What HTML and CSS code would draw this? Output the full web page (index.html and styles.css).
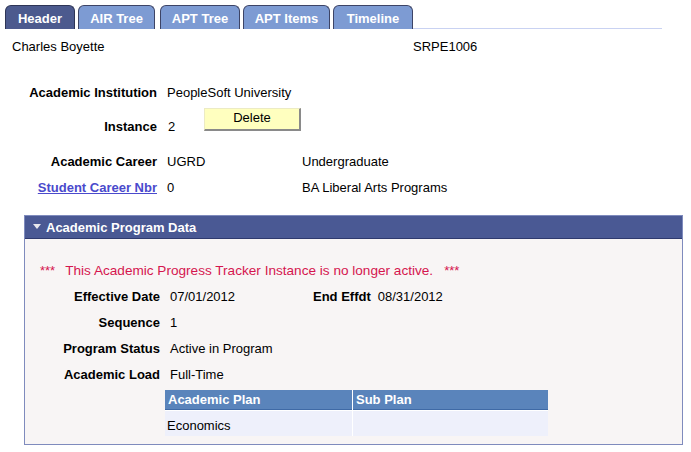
FILE: index.html
```html
<!DOCTYPE html>
<html>
<head>
<meta charset="utf-8">
<link rel="stylesheet" href="styles.css">
</head>
<body>
<div class="page">
  <nav class="tabs">
    <div class="tab tab-active tab-w1">Header</div>
    <div class="tab tab-w2">AIR Tree</div>
    <div class="tab tab-w3">APT Tree</div>
    <div class="tab tab-w4">APT Items</div>
    <div class="tab tab-w5">Timeline</div>
    <div class="tab-fill"></div>
  </nav>

  <div class="ident">
    <span>Charles Boyette</span>
    <span>SRPE1006</span>
  </div>

  <div class="fields">
    <div class="frow r1">
      <span class="lbl">Academic Institution</span>
      <span class="val">PeopleSoft University</span>
      <span class="desc"></span>
    </div>
    <div class="frow r2">
      <span class="lbl">Instance</span>
      <span class="val inst"><span class="num">2</span><button class="btn">Delete</button></span>
      <span class="desc"></span>
    </div>
    <div class="frow r3">
      <span class="lbl">Academic Career</span>
      <span class="val">UGRD</span>
      <span class="desc">Undergraduate</span>
    </div>
    <div class="frow r4">
      <span class="lbl"><a class="link" href="#">Student Career Nbr</a></span>
      <span class="val">0</span>
      <span class="desc">BA Liberal Arts Programs</span>
    </div>
  </div>

  <section class="box">
    <div class="box-head">
      <svg class="tri" width="8" height="6" viewBox="0 0 8 6"><polygon points="0,0 8,0 4,5" fill="#e8e8ee"/></svg>
      <span>Academic Program Data</span>
    </div>
    <div class="box-body">
      <div class="msg"><span class="stars">***</span><span class="msg-text">This Academic Progress Tracker Instance is no longer active.</span><span class="stars2">***</span></div>
      <div class="srow">
        <span class="slbl">Effective Date</span>
        <span class="sval">07/01/2012</span>
        <span class="slbl2">End Effdt</span>
        <span>08/31/2012</span>
      </div>
      <div class="srow">
        <span class="slbl">Sequence</span>
        <span class="sval">1</span>
      </div>
      <div class="srow">
        <span class="slbl">Program Status</span>
        <span class="sval">Active in Program</span>
      </div>
      <div class="srow">
        <span class="slbl">Academic Load</span>
        <span class="sval">Full-Time</span>
      </div>
      <div class="grid">
        <div class="gh">Academic Plan</div>
        <div class="gh">Sub Plan</div>
        <div class="gc">Economics</div>
        <div class="gc"></div>
      </div>
    </div>
  </section>
</div>
</body>
</html>
```

FILE: styles.css
```css
html, body {
  margin: 0;
  padding: 0;
  background: #ffffff;
}
body {
  font-family: "Liberation Sans", Arial, sans-serif;
  font-size: 13px;
  color: #000000;
}
.page {
  width: 691px;
}

/* tabs */
.tabs {
  display: flex;
  align-items: flex-end;
  padding: 5px 0 0 5px;
  height: 24px;
}
.tab {
  box-sizing: border-box;
  height: 24px;
  margin-right: 3px;
  border: 1px solid #3d4466;
  border-bottom: none;
  border-radius: 6px 6px 0 0;
  background: #7d9bd3;
  color: #ffffff;
  font-weight: bold;
  font-size: 13px;
  display: flex;
  align-items: center;
  justify-content: center;
  padding-top: 1px;
}
.tab-active {
  background: #4c5a8e;
  border-color: #2e3556;
}
.tab-w1 { width: 70px; }
.tab-w2 { width: 77px; margin-right: 5px; }
.tab-w3 { width: 80px; }
.tab-w4 { width: 87px; }
.tab-w5 { width: 80px; margin-right: 0; }
.tab-fill {
  width: 249px;
  height: 0;
  border-bottom: 1px solid #c9d2f2;
}

/* identity line */
.ident {
  display: grid;
  grid-template-columns: 401px auto;
  padding-left: 12px;
  margin-top: 8px;
  height: 20px;
  line-height: 20px;
}

/* header fields */
.fields {
  margin-top: 24px;
}
.frow {
  display: grid;
  grid-template-columns: 167px 135px auto;
  align-items: center;
}
.r1 { height: 22px; }
.r2 { height: 46px; }
.r3 { height: 24px; }
.r4 { height: 28px; }
.lbl {
  text-align: right;
  padding-right: 10px;
  font-weight: bold;
}
.link {
  color: #4a4acc;
  text-decoration: underline;
}
.inst {
  display: flex;
  align-items: flex-start;
  align-self: stretch;
}
.num {
  width: 36px;
  padding-left: 1px;
  margin-top: 16px;
}
.btn {
  margin-top: 5px;
  width: 97px;
  height: 23px;
  padding: 0 0 3px 0;
  background: #ffffbf;
  border-top: 1px solid #ecebc4;
  border-left: 1px solid #ecebc4;
  border-right: 2px solid #8a8a8a;
  border-bottom: 2px solid #8a8a8a;
  font-family: "Liberation Sans", Arial, sans-serif;
  font-size: 13px;
  color: #000000;
}

/* section box */
.box {
  margin: 14px 0 0 24px;
  width: 659px;
  box-sizing: border-box;
  border: 1px solid #7f8bbd;
  background: #f8f5f5;
}
.box-head {
  height: 22px;
  background: #4a5994;
  border-bottom: 1px solid #2f3a6e;
  color: #ffffff;
  font-weight: bold;
  display: flex;
  align-items: center;
  padding-left: 8px;
}
.tri {
  margin-right: 5px;
}
.box-body {
  padding: 18px 0 8px 0;
}
.msg {
  height: 26px;
  display: flex;
  align-items: center;
  padding-left: 15px;
  color: #d5164f;
}
.stars {
  margin-right: 10px;
}
.msg-text {
  font-size: 13.6px;
}
.stars2 {
  margin-left: 11px;
}
.srow {
  height: 26px;
  display: flex;
  align-items: center;
}
.slbl {
  box-sizing: border-box;
  width: 145px;
  text-align: right;
  padding-right: 10px;
  font-weight: bold;
}
.sval {
  width: 143px;
}
.slbl2 {
  font-weight: bold;
  margin-right: 7px;
}

/* grid */
.grid {
  margin: 3px 0 0 140px;
  width: 383px;
  display: grid;
  grid-template-columns: 187px 195px;
  grid-template-rows: 20px 25px;
  column-gap: 1px;
  row-gap: 1px;
  background: #ffffff;
}
.gh {
  background: #5a84bb;
  border-bottom: 1px solid #3f6aa6;
  color: #ffffff;
  font-weight: bold;
  padding-left: 3px;
  display: flex;
  align-items: center;
}
.gc {
  background: #eef0fb;
  padding: 3px 0 0 2px;
  display: flex;
  align-items: center;
}
```
